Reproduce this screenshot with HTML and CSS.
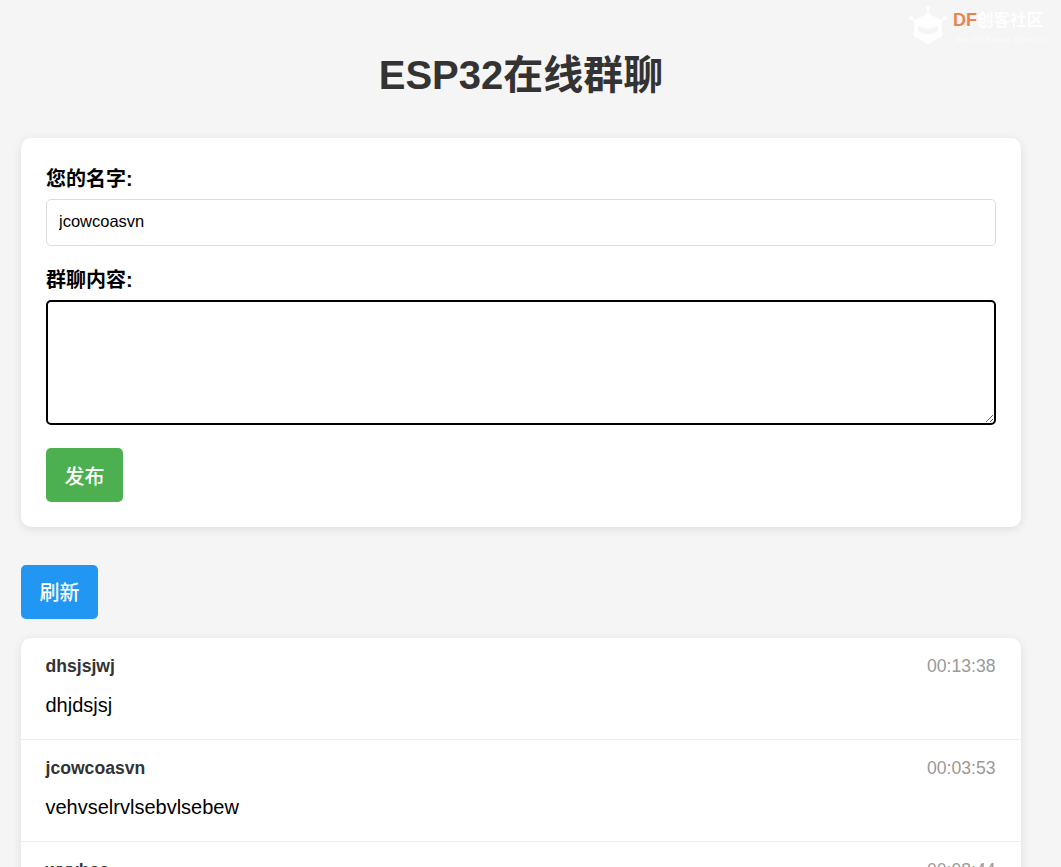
FILE: index.html
```html
<!DOCTYPE html>
<html lang="zh">
<head>
<meta charset="utf-8">
<title>ESP32在线群聊</title>
<link rel="stylesheet" href="styles.css">
</head>
<body>
<div class="watermark">
  <svg class="wm-icon" width="42" height="44" viewBox="0 0 42 44">
    <g fill="#ffffff">
      <circle cx="20" cy="7" r="2"/>
      <circle cx="3" cy="17" r="2"/>
      <circle cx="37" cy="17" r="2"/>
      <path d="M19.200 7h1.600v5h-1.600zM3 16.300l5 2.500-.8 1.400-5-2.500zM37 16.300l-5 2.500.8 1.400 5-2.500z"/>
      <path d="M20 12l14 8v15.500l-14 7.500-14-7.500V20zM10 25v5c3 2 6.500 3 10 3s7-1 10-3v-5c-3 1.500-6.500 2.300-10 2.300S13 26.500 10 25z" fill-rule="evenodd"/>
    </g>
  </svg>
  <div class="wm-text">
    <div class="wm-title"><span class="wm-df">DF</span>创客社区</div>
    <div class="wm-sub">mc.DFRobot.com.cn</div>
  </div>
</div>
<div class="container">
  <h1 class="title">ESP32在线群聊</h1>
  <form class="card form-card">
    <div class="field">
      <label class="label" for="name">您的名字:</label>
      <input class="input" id="name" type="text" value="jcowcoasvn">
    </div>
    <div class="field field-last">
      <label class="label" for="msg">群聊内容:</label>
      <textarea class="input textarea" id="msg"></textarea>
    </div>
    <button class="btn btn-green" type="button">发布</button>
  </form>
  <button class="btn btn-blue" type="button">刷新</button>
  <div class="card list">
    <div class="msg">
      <div class="msg-head"><span class="msg-name">dhsjsjwj</span><span class="msg-time">00:13:38</span></div>
      <div class="msg-body">dhjdsjsj</div>
    </div>
    <div class="msg">
      <div class="msg-head"><span class="msg-name">jcowcoasvn</span><span class="msg-time">00:03:53</span></div>
      <div class="msg-body">vehvselrvlsebvlsebew</div>
    </div>
    <div class="msg">
      <div class="msg-head"><span class="msg-name">wvvhee</span><span class="msg-time">00:08:44</span></div>
      <div class="msg-body">hello</div>
    </div>
  </div>
</div>
</body>
</html>
```
FILE: styles.css
```css
* { box-sizing: border-box; }
html, body { height: 867px; overflow: hidden; }
body {
  margin: 0;
  padding: 20px 0 0 21px;
  background: #f5f5f5;
  color: #000;
  font-family: "Liberation Sans", "Noto Sans CJK SC", sans-serif;
  font-size: 16px;
}
.container { width: 1000px; }
.title {
  margin: 28px 0 36px;
  text-align: center;
  color: #333;
  font-size: 40px;
  line-height: 54px;
  font-weight: 700;
}
.card {
  background: #fff;
  border-radius: 10px;
  box-shadow: 0 2px 10px rgba(0, 0, 0, 0.1);
}
.form-card { padding: 28px 25px 25px; margin-bottom: 38px; }
.field { margin-bottom: 21px; }
.field-last { margin-bottom: 23px; }
.label {
  display: block;
  margin-bottom: 7px;
  font-size: 20px;
  line-height: 26px;
  font-weight: 700;
}
.input {
  display: block;
  width: 100%;
  height: 47px;
  padding: 11px 12px 13px;
  border: 1px solid #ddd;
  border-radius: 5px;
  background: #fff;
  color: #000;
  font-family: inherit;
  font-size: 16.5px;
}
.textarea {
  height: 125px;
  border: 2px solid #000;
  border-radius: 5px;
  outline: none;
}
.btn {
  display: block;
  width: 77px;
  height: 54px;
  padding: 0;
  border: 0;
  border-radius: 5px;
  color: #fff;
  font-family: inherit;
  font-size: 20px;
  font-weight: 500;
}
.btn-green { background: #4caf50; }
.btn-blue { background: #2196f3; padding-bottom: 2px; }
.list { margin-top: 19px; overflow: hidden; }
.msg { padding: 15px 25px 0 24.5px; height: 102px; border-bottom: 1px solid #eee; }
.msg-head { display: flex; justify-content: space-between; line-height: 26px; }
.msg-name { color: #333; font-size: 17.6px; font-weight: 700; }
.msg-time { color: #999; font-size: 17.6px; margin-right: .5px; }
.msg-body { margin-top: 13px; font-size: 20px; line-height: 26px; }
.watermark {
  position: absolute;
  top: 1px;
  left: 908px;
  display: flex;
  align-items: flex-start;
  opacity: 0.9;
}
.wm-icon { margin-right: 3px; }
.wm-text { margin-top: 9px; }
.wm-title { color: #fff; font-size: 16.5px; line-height: 20px; font-weight: 700; white-space: nowrap; }
.wm-df { color: #e8793a; font-size: 18px; }
.wm-sub { margin: 4px 0 0 3px; color: #fff; font-size: 8px; line-height: 12px; letter-spacing: 1px; white-space: nowrap; }
```
